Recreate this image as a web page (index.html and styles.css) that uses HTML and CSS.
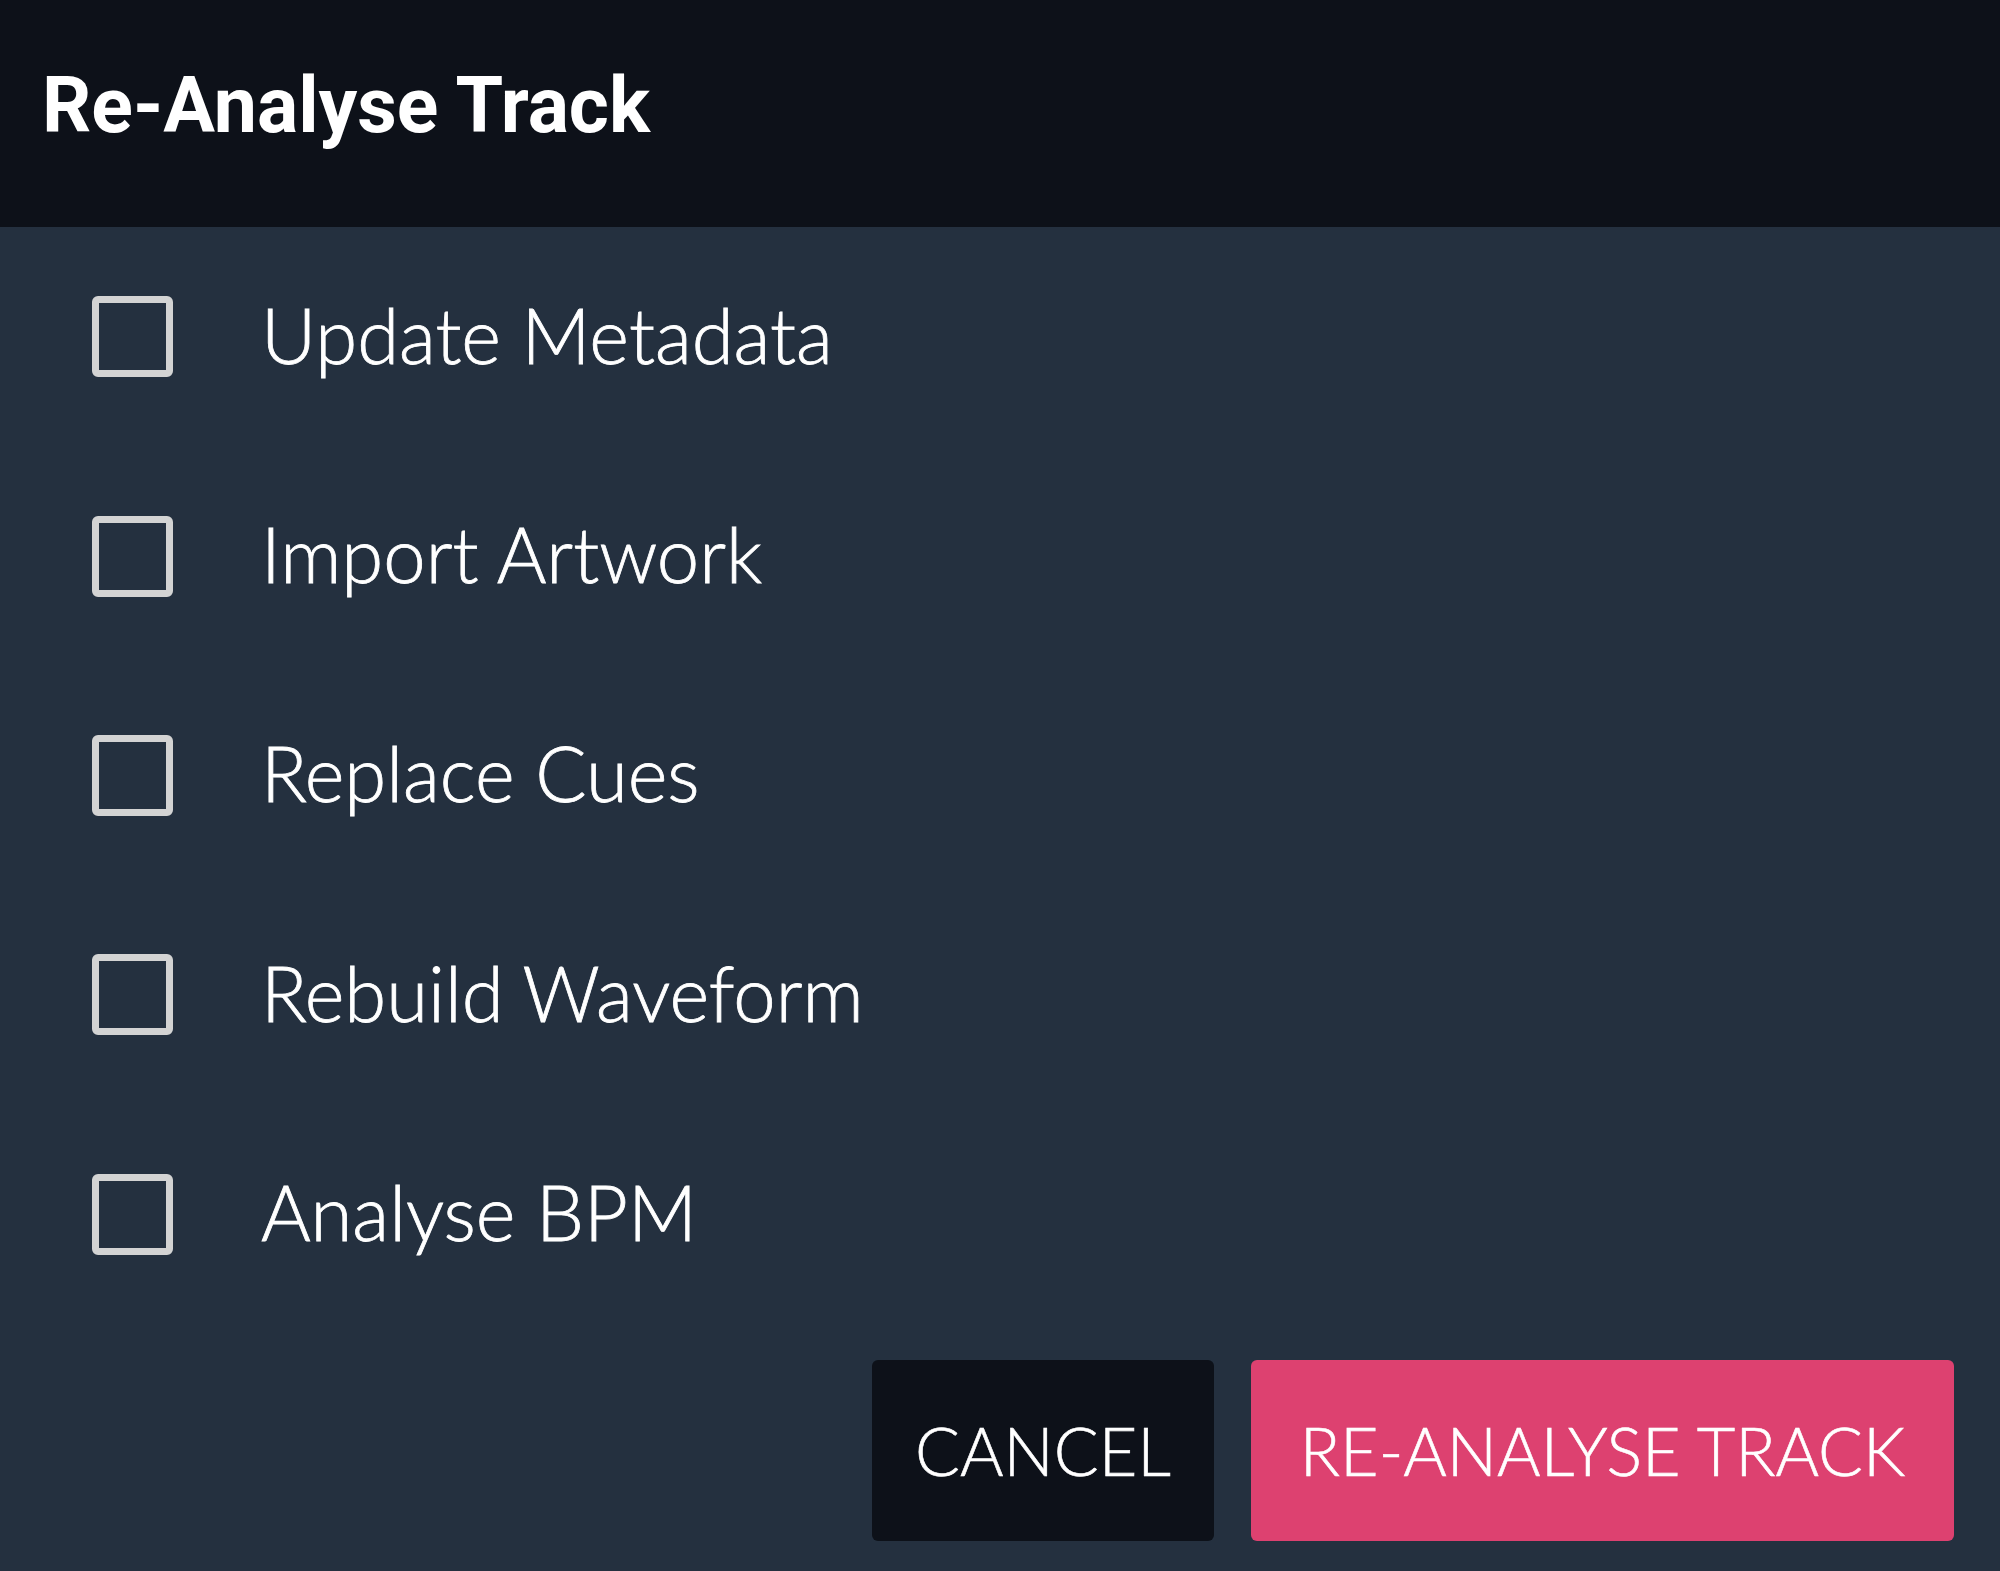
FILE: index.html
```html
<!DOCTYPE html>
<html>
<head>
<meta charset="utf-8">
<link rel="stylesheet" href="styles.css">
</head>
<body>
<div class="dialog">
  <header class="header"><h1 class="title">Re-Analyse Track</h1></header>
  <ul class="options">
    <li class="option"><span class="box"></span><span class="label">Update Metadata</span></li>
    <li class="option"><span class="box"></span><span class="label">Import Artwork</span></li>
    <li class="option"><span class="box"></span><span class="label">Replace Cues</span></li>
    <li class="option"><span class="box"></span><span class="label">Rebuild Waveform</span></li>
    <li class="option"><span class="box"></span><span class="label">Analyse BPM</span></li>
  </ul>
  <div class="actions">
    <button class="btn btn-cancel">CANCEL</button>
    <button class="btn btn-primary">RE-ANALYSE TRACK</button>
  </div>
</div>
</body>
</html>
```

FILE: styles.css
```css
html, body {
  margin: 0;
  padding: 0;
  background: #24303f;
  width: 2000px;
  height: 1571px;
  overflow: hidden;
}
.dialog {
  display: flex;
  flex-direction: column;
  height: 1571px;
  font-family: "Lato", "Open Sans", sans-serif;
  color: #ffffff;
}
.header {
  background: #0d1119;
  height: 227px;
  display: flex;
  align-items: center;
  padding-left: 42px;
  box-sizing: border-box;
}
.title {
  margin: 0 0 14px 0;
  font-family: "Roboto", "Liberation Sans", sans-serif;
  font-weight: 700;
  font-size: 77px;
  letter-spacing: 0;
  line-height: 1;
}
.options {
  list-style: none;
  margin: 0;
  padding: 0;
  display: flex;
  flex-direction: column;
}
.option {
  height: 219.4px;
  display: flex;
  align-items: center;
  padding-left: 92px;
}
.box {
  width: 81px;
  height: 81px;
  box-sizing: border-box;
  border: 7px solid #d3d3d3;
  border-radius: 6px;
  flex: none;
}
.label {
  margin-left: 88px;
  font-size: 76px;
  font-weight: 300;
  -webkit-text-stroke: 0.8px #ffffff;
  line-height: 1;
  margin-top: -4px;
}
.actions {
  display: flex;
  justify-content: flex-end;
  gap: 37px;
  padding-right: 46px;
  margin-top: 36px;
}
.btn {
  height: 181px;
  border: none;
  border-radius: 6px;
  color: #ffffff;
  font-family: "Lato", "Open Sans", sans-serif;
  font-size: 66.5px;
  font-weight: 300;
  -webkit-text-stroke: 0.6px #ffffff;
  display: flex;
  align-items: center;
  justify-content: center;
  padding: 0;
}
.btn-cancel {
  width: 342px;
  background: #0d1119;
}
.btn-primary {
  width: 703px;
  background: #dd4170;
}
```
